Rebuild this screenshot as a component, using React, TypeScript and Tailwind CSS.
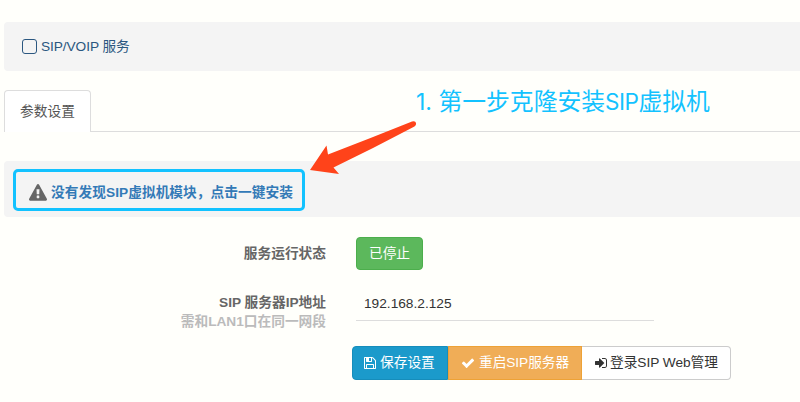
import React from "react";

function Glyph({ d, className }: { d: string; className: string }) {
  return (
    <svg viewBox="0 0 1792 1792" fill="currentColor" className={className} aria-hidden="true">
      <path d={d} />
    </svg>
  );
}

const warning =
  "M1024 1375v-190q0-14-9.5-23.5t-22.5-9.5h-192q-13 0-22.5 9.5t-9.5 23.5v190q0 14 9.5 23.5t22.5 9.5h192q13 0 22.5-9.5t9.5-23.5zm-2-374l18-459q0-12-10-19-13-11-24-11h-220q-11 0-24 11-10 7-10 21l17 457q0 10 10 16.5t24 6.5h185q14 0 23.5-6.5t10.5-16.5zm-14-934l768 1408q35 63-2 126-17 29-46.5 46t-63.5 17h-1536q-34 0-63.5-17t-46.5-46q-37-63-2-126l768-1408q17-31 47-49t65-18 65 18 47 49z";
const floppy =
  "M512 1536h768v-384h-768v384zm896 0h128v-896q0-14-10-38.5t-20-34.5l-281-281q-10-10-34-20t-39-10v416q0 40-28 68t-68 28h-576q-40 0-68-28t-28-68v-416h-128v1280h128v-416q0-40 28-68t68-28h832q40 0 68 28t28 68v416zm-384-928v-320q0-13-9.5-22.5t-22.5-9.5h-192q-13 0-22.5 9.5t-9.5 22.5v320q0 13 9.5 22.5t22.5 9.5h192q13 0 22.5-9.5t9.5-22.5zm640 32v928q0 40-28 68t-68 28h-1344q-40 0-68-28t-28-68v-1344q0-40 28-68t68-28h928q40 0 88 20t76 48l280 280q28 28 48 76t20 88z";
const check =
  "M1671 566q0 40-28 68l-724 724-136 136q-28 28-68 28t-68-28l-136-136-362-362q-28-28-28-68t28-68l136-136q28-28 68-28t68 28l294 295 656-657q28-28 68-28t68 28l136 136q28 28 28 68z";
const signIn =
  "M1312 896q0 26-19 45l-544 544q-19 19-45 19t-45-19-19-45v-288h-448q-26 0-45-19t-19-45v-384q0-26 19-45t45-19h448v-288q0-26 19-45t45-19 45 19l544 544q19 19 19 45zm352-352v704q0 119-84.5 203.5t-203.5 84.5h-320q-13 0-22.5-9.5t-9.5-22.5q0-4-1-20t-.5-26.5 3-23.5 10-19.5 20.5-6.5h320q66 0 113-47t47-113v-704q0-66-47-113t-113-47h-312l-11.5-1-11.5-3-8-5.5-7-9-2-13.5q0-4-1-20t-.5-26.5 3-23.5 10-19.5 20.5-6.5h320q119 0 203.5 84.5t84.5 203.5z";

export default function App() {
  return (
    <div className="relative h-[402px] w-full overflow-hidden bg-[#fffffb] pl-1 pt-[22px] font-['Liberation_Sans','Noto_Sans_CJK_SC',sans-serif] text-[13.7px] leading-5 text-[#333]">
      <header className="flex h-[49px] items-center rounded-l bg-[#f4f4f4] pl-[18px] text-[#2b5780]">
        <span className="mr-1 size-[15px] rounded-[3px] border-[1.5px] border-[#2b5780]" />
        <span className="pt-px tracking-[-0.08px]">SIP/VOIP 服务</span>
      </header>

      <nav className="mt-[19px] flex h-[42px] border-b border-[#ddd]">
        <button className="-mb-px h-[42px] w-[87px] rounded-t border border-b-0 border-[#ddd] bg-white text-center text-[#555]">
          参数设置
        </button>
      </nav>

      <section className="mt-[29px] flex h-14 items-center rounded-l bg-[#f4f4f4] pl-[9px] pt-1">
        <a className="-mt-[2px] flex h-[42px] w-[292px] items-center rounded-[5px] border-3 border-[#13c2ff] pl-[13px] pt-[5px] font-bold text-[#337ab7]">
          <Glyph d={warning} className="mr-[4px] size-[18px] shrink-0 text-[#666]" />
          <span className="whitespace-nowrap pt-px tracking-[0.05px]">没有发现SIP虚拟机模块，点击一键安装</span>
        </a>
      </section>

      <div className="mt-5 flex h-[33px] items-center">
        <div className="w-[322px] pt-px text-right font-bold text-[#666]">服务运行状态</div>
        <span className="ml-[30px] flex h-[33px] w-[67px] items-center justify-center rounded border border-[#4cae4c] bg-[#5cb85c] text-white">
          已停止
        </span>
      </div>

      <div className="mt-[22px] flex h-[39px]">
        <div className="w-[322px] pt-px text-right font-bold leading-[19px] text-[#666]">
          <div>SIP 服务器IP地址</div>
          <div className="text-[#bbb]">需和LAN1口在同一网段</div>
        </div>
        <div className="ml-[30px] flex h-[29px] w-[298px] items-center border-b border-[#ddd] pb-[5px] pl-2">192.168.2.125</div>
      </div>

      <div className="ml-[348px] mt-[15px] flex h-[34px] whitespace-nowrap">
        <button className="flex w-24 items-center rounded-l border border-[#168dbb] bg-[#1b9acb] pl-[10px] text-white">
          <Glyph d={floppy} className="mr-[3px] size-[14px]" />
          保存设置
        </button>
        <button className="flex w-[134px] items-center border border-[#eea236] bg-[#f0ad57] pl-[12px] text-white">
          <Glyph d={check} className="mr-1 size-[14px]" />
          <span className="tracking-[-0.06px]">重启SIP服务器</span>
        </button>
        <button className="flex w-[149px] items-center rounded-r border border-l-0 border-[#ccc] bg-white pl-3 text-[#333]">
          <Glyph d={signIn} className="mr-[2px] size-[14px]" />
          <span className="tracking-[-0.04px]">登录SIP Web管理</span>
        </button>
      </div>

      <div className="absolute left-[416px] top-[86px] whitespace-nowrap text-[23.8px] leading-8 text-[#13c2ff] font-['Inter','Noto_Sans_CJK_SC',sans-serif]">
        <span className="text-[23px]">1. </span>第一步克隆安装<span className="text-[22.5px] tracking-[-0.5px]">SIP</span>虚拟机
      </div>
      <svg className="absolute left-[300px] top-[110px]" width="130" height="75" viewBox="300 110 130 75" aria-hidden="true">
        <path
          d="M310 170 L326.5 145.5 L328 154.5 Q371 138 412 121.5 Q415.5 120.5 416 123 Q416.500 125.500 413.500 127 Q374 148 333.500 167.500 L339 174 Z"
          fill="#ff431a"
        />
      </svg>
    </div>
  );
}
